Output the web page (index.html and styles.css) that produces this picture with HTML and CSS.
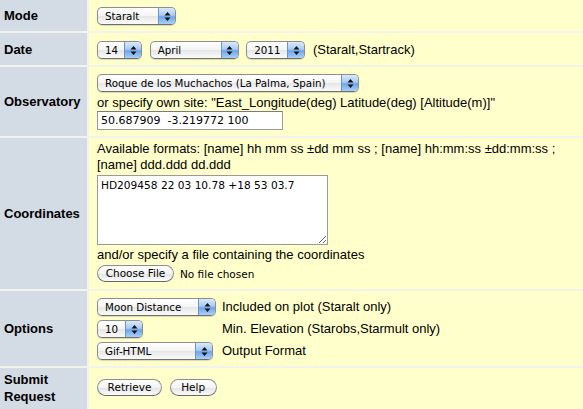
FILE: index.html
```html
<!DOCTYPE html>
<html>
<head>
    <meta charset="UTF-8">
    <title>Staralt</title>
    <link rel="stylesheet" href="styles.css">
</head>
<body>
    <form>
    <table class="form-table">
        <!-- Mode -->
        <tr class="row-mode">
            <th>Mode</th>
            <td>
                <span class="popup w-mode"><span class="popup-text">Staralt</span><span class="popup-arrows"><svg width="7" height="11" viewBox="0 0 7 11"><path d="M3.5 1 L6.5 4.5 H0.5 Z M3.5 10 L6.5 6.5 H0.5 Z" fill="#111"/></svg></span></span>
            </td>
        </tr>
        <!-- Date -->
        <tr class="row-date">
            <th>Date</th>
            <td>
                <span class="popup w-day"><span class="popup-text">14</span><span class="popup-arrows"><svg width="7" height="11" viewBox="0 0 7 11"><path d="M3.5 1 L6.5 4.5 H0.5 Z M3.5 10 L6.5 6.5 H0.5 Z" fill="#111"/></svg></span></span>
                <span class="popup w-month"><span class="popup-text">April</span><span class="popup-arrows"><svg width="7" height="11" viewBox="0 0 7 11"><path d="M3.5 1 L6.5 4.5 H0.5 Z M3.5 10 L6.5 6.5 H0.5 Z" fill="#111"/></svg></span></span>
                <span class="popup w-year"><span class="popup-text">2011</span><span class="popup-arrows"><svg width="7" height="11" viewBox="0 0 7 11"><path d="M3.5 1 L6.5 4.5 H0.5 Z M3.5 10 L6.5 6.5 H0.5 Z" fill="#111"/></svg></span></span>
                <span class="note">(Staralt,Startrack)</span>
            </td>
        </tr>
        <!-- Observatory -->
        <tr class="row-obs">
            <th>Observatory</th>
            <td>
                <span class="popup w-obs"><span class="popup-text">Roque de los Muchachos (La Palma, Spain)</span><span class="popup-arrows"><svg width="7" height="11" viewBox="0 0 7 11"><path d="M3.5 1 L6.5 4.5 H0.5 Z M3.5 10 L6.5 6.5 H0.5 Z" fill="#111"/></svg></span></span>
                <div class="line">or specify own site: "East_Longitude(deg) Latitude(deg) [Altitude(m)]"</div>
                <input type="text" class="site" value="50.687909  -3.219772 100">
            </td>
        </tr>
        <!-- Coordinates -->
        <tr class="row-coords">
            <th>Coordinates</th>
            <td>
                <div class="line">Available formats: [name] hh mm ss &plusmn;dd mm ss ; [name] hh:mm:ss &plusmn;dd:mm:ss ; [name] ddd.ddd dd.ddd</div>
                <textarea class="coords">HD209458 22 03 10.78 +18 53 03.7</textarea>
                <div class="line">and/or specify a file containing the coordinates</div>
                <div class="file-row"><span class="btn w-choose">Choose File</span><span class="file-name">No file chosen</span></div>
            </td>
        </tr>
        <!-- Options -->
        <tr class="row-opts">
            <th>Options</th>
            <td>
                <div class="opt">
                    <span class="popup w-moon"><span class="popup-text">Moon Distance</span><span class="popup-arrows"><svg width="7" height="11" viewBox="0 0 7 11"><path d="M3.5 1 L6.5 4.5 H0.5 Z M3.5 10 L6.5 6.5 H0.5 Z" fill="#111"/></svg></span></span>
                    <span class="opt-text">Included on plot (Staralt only)</span>
                </div>
                <div class="opt">
                    <span class="popup w-elev"><span class="popup-text">10</span><span class="popup-arrows"><svg width="7" height="11" viewBox="0 0 7 11"><path d="M3.5 1 L6.5 4.5 H0.5 Z M3.5 10 L6.5 6.5 H0.5 Z" fill="#111"/></svg></span></span>
                    <span class="opt-text">Min. Elevation (Starobs,Starmult only)</span>
                </div>
                <div class="opt">
                    <span class="popup w-fmt"><span class="popup-text">Gif-HTML</span><span class="popup-arrows"><svg width="7" height="11" viewBox="0 0 7 11"><path d="M3.5 1 L6.5 4.5 H0.5 Z M3.5 10 L6.5 6.5 H0.5 Z" fill="#111"/></svg></span></span>
                    <span class="opt-text">Output Format</span>
                </div>
            </td>
        </tr>
        <!-- Submit -->
        <tr class="row-submit">
            <th>Submit<br>Request</th>
            <td>
                <span class="btn w-retrieve">Retrieve</span>
                <span class="btn w-help">Help</span>
            </td>
        </tr>
    </table>
    </form>
</body>
</html>
```

FILE: styles.css
```css
body {
    margin: 0;
    background-color: #f3f3ee;
    overflow: hidden;
    font-family: "Liberation Sans", Arial, sans-serif;
    font-size: 13px;
    color: #000;
}
form {
    margin: 0;
}
.form-table {
    border-spacing: 2px;
    margin: -2px 0 0 -2px;
    width: 587px;
}
.form-table th {
    background-color: #d3dbe4;
    width: 81px;
    padding: 0 2px 0 4px;
    text-align: left;
    font-weight: bold;
    vertical-align: middle;
    line-height: 17px;
}
.form-table td {
    background-color: #ffffcc;
    padding: 0 0 0 8px;
    vertical-align: top;
    line-height: 16px;
}
/* row heights */
.row-mode td {
    height: 31px;
    padding-top: 7px;
    box-sizing: border-box;
}
.row-date td {
    height: 32px;
    padding-top: 8px;
    box-sizing: border-box;
}
.row-obs td {
    padding-top: 7px;
    padding-bottom: 6px;
}
.row-coords td {
    padding-top: 3px;
    padding-bottom: 7px;
}
.row-opts td {
    padding-top: 7px;
    padding-bottom: 6px;
}
.row-submit td {
    height: 44px;
    padding-top: 11px;
    box-sizing: border-box;
}
.row-submit th {
    vertical-align: top;
    padding-top: 3px;
}
/* aqua style popups */
.popup {
    display: inline-flex;
    height: 18px;
    border: 1px solid #8d8d8d;
    border-bottom-color: #6f6f6f;
    border-radius: 5px;
    overflow: hidden;
    vertical-align: top;
    box-sizing: border-box;
    background: linear-gradient(#ffffff, #f4f4f4 50%, #e6e6e6 51%, #fafafa);
    box-shadow: 0 1px 1px rgba(0, 0, 0, 0.15);
    font-family: "DejaVu Sans", sans-serif;
    font-size: 10.3px;
    line-height: 16px;
    margin-right: 4px;
}
.popup-text {
    flex: 1;
    padding-left: 7px;
    white-space: nowrap;
    overflow: hidden;
}
.popup-arrows {
    width: 16px;
    display: flex;
    align-items: center;
    justify-content: center;
    border-left: 1px solid #6f93c4;
    background: linear-gradient(#d9e9fb, #a9cbf3 45%, #6ea5ea 55%, #a8d0fb);
}
.w-mode { width: 79px; }
.w-day { width: 45px; }
.w-month { width: 89px; }
.w-year { width: 59px; }
.w-obs { width: 262px; }
.w-moon { width: 119px; margin-right: 6px; }
.w-elev { width: 46px; margin-right: 6px; }
.w-fmt { width: 116px; margin-right: 6px; }
.note {
    line-height: 18px;
}
.row-obs .line {
    margin-top: 3px;
}
.site {
    display: block;
    width: 186px;
    height: 19px;
    box-sizing: border-box;
    margin: 0;
    padding: 1px 3px;
    border: 1px solid #9a9a9a;
    border-top-color: #7b7b7b;
    background: #fff;
    font-family: "DejaVu Sans", sans-serif;
    font-size: 11px;
}
.coords {
    display: block;
    width: 231px;
    height: 70px;
    box-sizing: border-box;
    margin: 2px 0 2px;
    padding: 3px 3px;
    border: 1px solid #9a9a9a;
    background: #fff;
    font-family: "DejaVu Sans", sans-serif;
    font-size: 10.6px;
    line-height: 13px;
    resize: both;
}
.file-row {
    margin-top: 2px;
    display: flex;
    align-items: center;
}
.btn {
    display: inline-block;
    height: 17px;
    box-sizing: border-box;
    border: 1px solid #8d8d8d;
    border-bottom-color: #666;
    border-radius: 9px;
    background: linear-gradient(#ffffff, #f3f3f3 50%, #e4e4e4 51%, #fbfbfb);
    font-family: "DejaVu Sans", sans-serif;
    font-size: 10.5px;
    line-height: 15px;
    text-align: center;
    vertical-align: top;
}
.w-choose { width: 77px; }
.w-retrieve { width: 65px; margin-right: 4px; }
.w-help { width: 47px; }
.file-name {
    font-family: "DejaVu Sans", sans-serif;
    font-size: 10.5px;
    margin-left: 6px;
}
.opt {
    display: flex;
    align-items: center;
    height: 18px;
    margin-bottom: 4px;
}
.opt:last-child {
    margin-bottom: 0;
}
.opt .popup {
    flex: none;
}
.w-elev + .opt-text { margin-left: 73px; }
.w-fmt + .opt-text { margin-left: 3px; }
```
